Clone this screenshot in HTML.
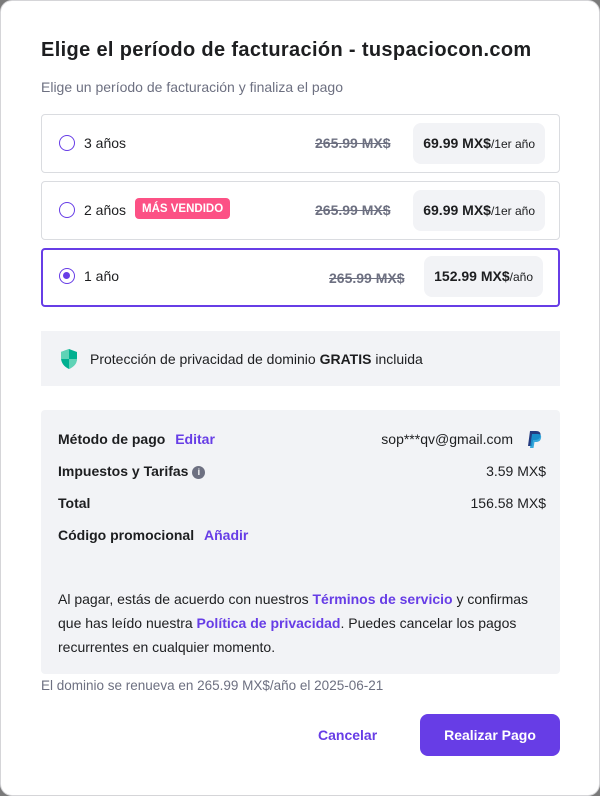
<!DOCTYPE html>
<html><head><meta charset="utf-8"><style>
*{box-sizing:border-box;margin:0;padding:0}
body{width:600px;height:796px;background:#7a7a7a;font-family:"Liberation Sans",sans-serif;color:#2f1c6a;overflow:hidden}
.m{position:absolute;left:0;top:0;width:600px;height:796px;background:#fff;border-radius:12px;border:1px solid #d5d5d8}
h1{position:absolute;left:40px;top:38px;font-size:20px;font-weight:bold;color:#1d1e20;letter-spacing:0.35px}
.sub{position:absolute;left:40px;top:78px;font-size:14px;color:#6d7081}
.opt{position:absolute;left:40px;width:519px;height:59px;border:1px solid #dadce0;border-radius:4px}
.opt.sel{border:2px solid #673de6}
.radio{position:absolute;left:17px;top:20px;width:16px;height:16px;border:1.5px solid #673de6;border-radius:50%}
.sel .radio{left:16px;top:18px}
.sel .radio:after{content:"";position:absolute;left:3px;top:3px;width:7px;height:7px;border-radius:50%;background:#673de6}
.lbl{position:absolute;left:42px;top:20px;font-size:14px;color:#1d1e20}
.sel .lbl{left:41px;top:18px}
.badge{position:absolute;left:93px;top:16px;background:#fc5185;color:#fff;font-size:11.5px;font-weight:bold;padding:5px 7px 4px;border-radius:4px}
.old{position:absolute;top:20px;font-size:14px;color:#6d7081;font-weight:bold;text-decoration:line-through}
.price{position:absolute;right:14px;top:8px;height:41px;background:#f2f3f6;border-radius:8px;padding:0 10px;line-height:41px;font-size:14px;font-weight:bold;color:#1d1e20}
.price span{font-weight:normal;font-size:12px}
.sel .price{right:15px;top:6px}
.priv{position:absolute;left:40px;top:330px;width:519px;height:55px;background:#f2f3f6;font-size:14px;color:#1d1e20}
.box{position:absolute;left:40px;top:409px;width:519px;height:264px;background:#f2f3f6;border-radius:4px;font-size:14px;color:#1d1e20}
.r{position:absolute;left:17px;font-weight:bold}
.v{position:absolute;right:14px}
a{color:#673de6;font-weight:bold;text-decoration:none}
.terms{position:absolute;left:17px;top:177px;width:490px;font-size:14px;line-height:24px}
.ren{position:absolute;left:40px;top:677px;font-size:13.5px;color:#6d7081}
.cancel{position:absolute;left:317px;top:726px;font-size:14px;font-weight:bold;color:#673de6}
.btn{position:absolute;left:419px;top:713px;width:140px;height:42px;background:#673de6;border-radius:8px;color:#fff;font-size:14px;font-weight:bold;text-align:center;line-height:42px}
</style></head><body><div class="m">
<h1>Elige el período de facturación - tuspaciocon.com</h1>
<div class="sub">Elige un período de facturación y finaliza el pago</div>
<div class="opt" style="top:113px"><div class="radio"></div><div class="lbl">3 años</div><div class="old" style="left:273px">265.99 MX$</div><div class="price">69.99 MX$<span>/1er año</span></div></div>
<div class="opt" style="top:180px"><div class="radio"></div><div class="lbl">2 años</div><div class="badge">MÁS VENDIDO</div><div class="old" style="left:273px">265.99 MX$</div><div class="price">69.99 MX$<span>/1er año</span></div></div>
<div class="opt sel" style="top:247px"><div class="radio"></div><div class="lbl">1 año</div><div class="old" style="left:286px">265.99 MX$</div><div class="price">152.99 MX$<span>/año</span></div></div>
<div class="priv"><svg style="position:absolute;left:19px;top:17px" width="18" height="22" viewBox="0 0 18 22"><path d="M9 1L1 4v6c0 5 3.5 9 8 11 4.5-2 8-6 8-11V4z" fill="#00b090"/><path d="M9 1v10H1V4zM9 11h8c0 5-3.5 8-8 10z" fill="#5fd3b6"/></svg><div style="position:absolute;left:49px;top:20px">Protección de privacidad de dominio <b>GRATIS</b> incluida</div></div>
<div class="box">
<div class="r" style="top:21px">Método de pago <a style="margin-left:6px">Editar</a></div>
<div class="v" style="top:21px;right:47px">sop***qv@gmail.com</div>
<svg style="position:absolute;right:18px;top:21px" width="15" height="17" viewBox="0 0 15 17"><path d="M3 0h6c3 0 5 1.5 4.5 4.5C13 8 10.5 9 8 9H6l-1 6H1z" fill="#253b80"/><path d="M5 3h6c2.5 0 3.5 1.5 3 4-.5 3-2.5 4-5 4H7.5l-1 6H3z" fill="#179bd7" opacity=".85"/></svg>
<div class="r" style="top:53px">Impuestos y Tarifas <span style="display:inline-block;width:13px;height:13px;border-radius:50%;background:#6d7081;color:#fff;font-size:9px;text-align:center;line-height:13px;vertical-align:1px">i</span></div>
<div class="v" style="top:53px">3.59 MX$</div>
<div class="r" style="top:85px">Total</div>
<div class="v" style="top:85px">156.58 MX$</div>
<div class="r" style="top:117px">Código promocional <a style="margin-left:6px">Añadir</a></div>
<div class="terms">Al pagar, estás de acuerdo con nuestros <a>Términos de servicio</a> y confirmas que has leído nuestra <a>Política de privacidad</a>. Puedes cancelar los pagos recurrentes en cualquier momento.</div>
</div>
<div class="ren">El dominio se renueva en 265.99 MX$/año el 2025-06-21</div>
<div class="cancel">Cancelar</div>
<div class="btn">Realizar Pago</div>
</div></body></html>
